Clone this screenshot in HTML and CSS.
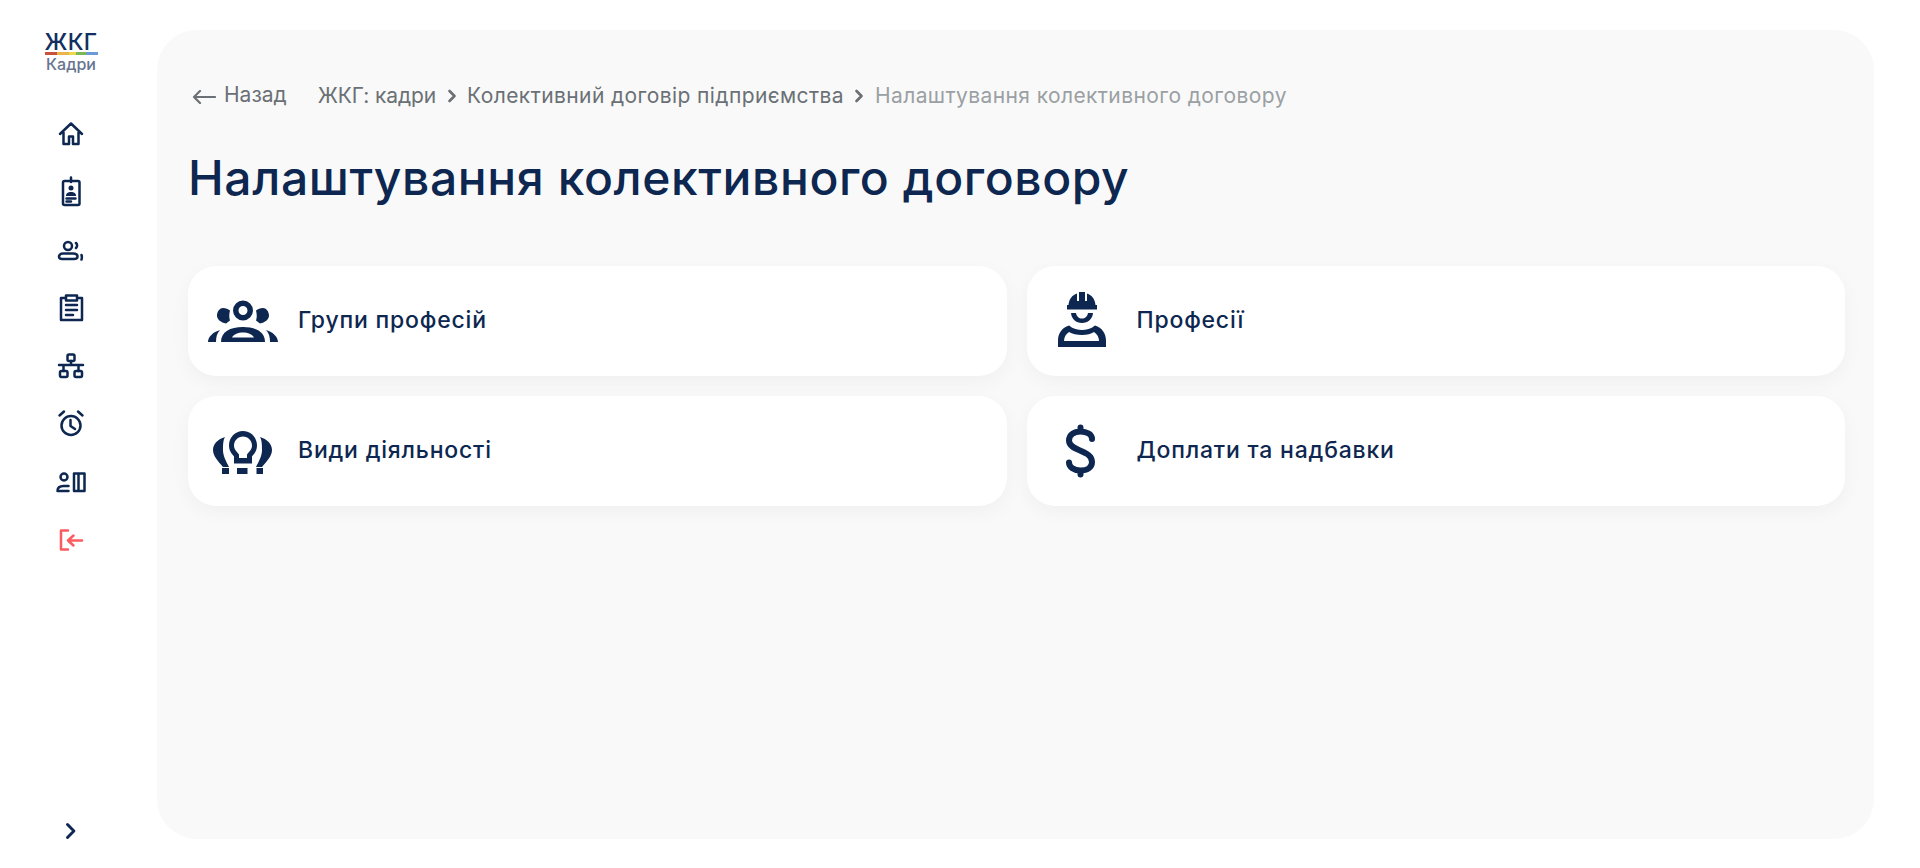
FILE: index.html
```html
<!DOCTYPE html>
<html lang="uk">
<head>
<meta charset="utf-8">
<title>Налаштування колективного договору</title>
<link rel="stylesheet" href="styles.css">
</head>
<body>
<div class="app">
  <aside class="sidebar">
    <div class="logo">
      <span class="logo-top">ЖКГ</span>
      <span class="logo-bar"></span>
      <span class="logo-sub">Кадри</span>
    </div>
    <nav class="nav">
      <a class="nav-item"><svg viewBox="0 0 32 32" class="ni"><path d="M5 17 16 6.500 27 17M8.500 15v12h5.500v-7.500h4V27h5.500V15"/></svg></a>
      <a class="nav-item"><svg viewBox="0 0 32 32" class="ni"><rect x="8" y="6" width="16.500" height="24" rx="1.500"/><path d="M16 2.500V7M11.500 23.500h9M11.500 26.500h4.500"/><circle class="fl" cx="16" cy="13" r="2.500"/><path class="fl" d="M11 21c0-3 2-4 5-4s5 1 5 4z"/></svg></a>
      <a class="nav-item"><svg viewBox="0 0 32 32" class="ni"><circle cx="13" cy="13" r="4"/><path d="M8 20.500h10c3 0 4.500 1.500 4.500 3s-1.500 2.500-3.500 2.500H7c-2 0-3-1-3-2.500s1.500-3 4-3zM21 10c1.500 1.500 1.500 3.500 0 5M26.500 22c.5 1.500.5 3 0 4.500"/></svg></a>
      <a class="nav-item"><svg viewBox="0 0 32 32" class="ni"><path d="M10.500 7H6v22h21V7h-4.500M11 4.500h11v5H11zM11 14h11M11 19h11M11 24h7"/></svg></a>
      <a class="nav-item"><svg viewBox="0 0 32 32" class="ni"><rect x="12.500" y="5.500" width="7" height="6.500" rx="1.500"/><rect x="5" y="22" width="7.500" height="6" rx="1.500"/><rect x="19.500" y="22" width="7.500" height="6" rx="1.500"/><path d="M16 12v4M4 16h24M8.500 16v6M23.500 16v6"/></svg></a>
      <a class="nav-item"><svg viewBox="0 0 32 32" class="ni"><circle cx="16" cy="18.500" r="9.500"/><path d="M15.500 13v6l4.500 3M4.500 8.500 9 4.500M27.500 8.500 23 4.500"/></svg></a>
      <a class="nav-item"><svg viewBox="0 0 32 32" class="ni"><circle cx="9" cy="12" r="3.500"/><path d="M2.500 26h11M2.500 26c0-3 2-5 6-5h5M19 8.500h10.500V26H19zM23.500 8.500V26"/></svg></a>
      <a class="nav-item"><svg viewBox="0 0 32 32" class="ni ni-exit"><path d="M13 7.500H6v19h7M27 17.500H13M18.500 12.500l-5.500 5 5.500 5"/></svg></a>
    </nav>
    <a class="expand"><svg viewBox="0 0 12 16" class="ni"><path d="M3 2.500 8.500 8 3 13.500"/></svg></a>
  </aside>

  <main class="panel">
    <div class="crumbs">
      <a class="back"><svg viewBox="0 0 24 14" class="back-ico"><path d="M23 7H2M8 1 2 7l6 6"/></svg><span class="back-t">Назад</span></a>
      <a class="crumb crumb-first">ЖКГ: кадри</a>
      <svg viewBox="0 0 10 14" class="sep"><path d="M2.500 2 7.500 7l-5 5"/></svg>
      <a class="crumb">Колективний договір підприємства</a>
      <svg viewBox="0 0 10 14" class="sep"><path d="M2.500 2 7.500 7l-5 5"/></svg>
      <span class="crumb crumb-now">Налаштування колективного договору</span>
    </div>
    <h1 class="title">Налаштування колективного договору</h1>
    <section class="grid">
      <a class="card">
        <svg viewBox="0 -2 72 60" class="ci"><path fill-rule="evenodd" d="M35 7.500a10 10 0 1 1 0 20 10 10 0 0 1 0-20zm0 5.500a4.500 4.500 0 1 0 0 9 4.500 4.500 0 0 0 0-9zM15 15c3 0 5 1 7 2.500-1 4-1 7 0 10l-4 3c-5-1-9-4-9-8 0-4 3-7.500 6-7.500zM55 15c-3 0-5 1-7 2.500 1 4 1 7 0 10l4 3c5-1 9-4 9-8 0-4-3-7.500-6-7.500zM35 34c13 0 22 5 22 15H13c0-10 9-15 22-15zm0 5.500c-5 0-9 1.500-11 5h22c-2-3.500-6-5-11-5zM12 37c-3 3-4 7-4 12H0c0-5 5-10 12-12zM58 37c3 3 4 7 4 12h8c0-5-5-10-12-12z"/></svg>
        <span class="card-t">Групи професій</span>
      </a>
      <a class="card">
        <svg viewBox="0 -2 72 60" class="ci"><path fill-rule="evenodd" d="M32-1h6v9h2V.5c5 1.500 8 6 8.500 11.500H50v4.500H20V12h1.500c.5-5.500 3.500-10 8.500-11.500V8h2zM24 20h5c.5 3.500 3 5.500 6 5.500s5.500-2 6-5.500h5c-.5 6-5 10-11 10S24.500 26 24 20zM35 37c4 0 9-1 13-4.500 7 2 11 8 11 15V54H11v-6.500c0-7 4-13 11-15 4 3.500 9 4.500 13 4.500zM22 39c-3 2-5 5-5 9h35c0-4-2-7-5-9-3 2-7 3-12 3s-10-1-13-3z"/></svg>
        <span class="card-t">Професії</span>
      </a>
      <a class="card">
        <svg viewBox="0 -2 72 60" class="ci"><path fill-rule="evenodd" d="M35 8c8 0 14 6.500 14 14.500 0 5-2.500 8-5 11v7H26v-7c-2.500-3-5-6-5-11C21 14.500 27 8 35 8zm0 5.500c-5 0-9 4-9 9 0 4 3 6.500 5 9V35h8v-3.500c2-2.500 5-5 5-9 0-5-4-9-9-9zM14 45h7v6h-7zM29 45h10.500v6H29zM48.500 45H55v6h-6.500zM17 14c-2 3-2 9-2 13 0 6 3 11 6 17h-6C10 38 5 33 5 27c0-6 5-11 12-13zM52 14c2 3 2 9 2 13 0 6-3 11-6 17h6c5-6 10-11 10-17 0-6-5-11-12-13z"/></svg>
        <span class="card-t">Види діяльності</span>
      </a>
      <a class="card">
        <svg viewBox="0 -2 72 60" class="ci ci-dollar"><path d="M45 16c0-4.500-5-7.500-11.500-7.500S22 12 22 17.500c0 11 23 9 23 21.500 0 5.500-5 8.500-11.500 8.500S22 44 22 39.500M33.500 4.500v4M33.500 47.500v4"/></svg>
        <span class="card-t">Доплати та надбавки</span>
      </a>
    </section>
  </main>
</div>
</body>
</html>
```
FILE: styles.css
```css
* { box-sizing: border-box; }
html, body { margin: 0; height: 100%; background: #fff; }
body { font-family: "Inter", "Noto Sans", sans-serif; color: #0d2750; }
.app { display: flex; height: 868px; overflow: hidden; }

.sidebar { width: 157px; flex: none; display: flex; flex-direction: column; align-items: center; padding-top: 32px; padding-right: 15px; }
.logo { display: flex; flex-direction: column; align-items: center; width: 54px; }
.logo-top { font-size: 23px; line-height: 20px; font-weight: 500; letter-spacing: .3px; color: #12305f; }
.logo-bar { width: 53px; height: 3px; background: linear-gradient(90deg, #c8513f 0 22%, #eab54a 22% 45%, #ecd94a 45% 58%, #7cb756 58% 78%, #6b9ad8 78%); }
.logo-sub { font-size: 16px; line-height: 19px; font-weight: 500; color: #66748f; }

.nav { display: flex; flex-direction: column; gap: 26px; margin-top: 43px; }
.nav-item { display: block; width: 32px; height: 32px; }
.ni { display: block; width: 100%; height: 100%; fill: none; stroke: #0d2750; stroke-width: 2.5; stroke-linecap: round; stroke-linejoin: round; }
.ni .fl { fill: #0d2750; stroke: none; }
.ni-exit { stroke: #fb5b5f; }
.expand { width: 14px; height: 20px; margin-top: auto; margin-bottom: 27px; }

.panel { flex: 1; margin: 30px 46px 29px 0; background: #f9f9f9; border-radius: 40px; padding: 0 29px 0 31px; min-width: 0; }

.crumbs { display: flex; align-items: center; height: 25px; margin-top: 53px; font-size: 21px; letter-spacing: .4px; color: #6a7075; }
.back { display: flex; align-items: center; margin-right: 31px; }
.back-ico { width: 24px; height: 14px; margin: 2px 8px 0 4px; fill: none; stroke: #6a7075; stroke-width: 2.2; stroke-linecap: round; stroke-linejoin: round; }
.back-t { position: relative; top: -1px; letter-spacing: 0; }
.crumb-first { letter-spacing: -.1px; }
.sep { width: 10px; height: 14px; margin: 0 10.5px; fill: none; stroke: #6a7075; stroke-width: 2.6; stroke-linecap: round; stroke-linejoin: round; }
.crumb-now { color: #9aa0a3; }

.title { margin: 42px 0 0; font-size: 48px; line-height: 56px; font-weight: 500; color: #0d2750; letter-spacing: .6px; }

.grid { display: grid; grid-template-columns: 1fr 1fr; gap: 20px; margin-top: 60px; }
.card { display: flex; align-items: center; gap: 18px; height: 110px; background: #fff; border-radius: 28px; box-shadow: 0 6px 20px rgba(20, 30, 60, .04); padding-left: 20px; }
.ci { display: block; flex: none; width: 72px; height: 60px; fill: #0d2750; }
.ci-dollar { fill: none; stroke: #0d2750; stroke-width: 6; stroke-linecap: round; }
.card-t { font-size: 23px; font-weight: 500; color: #0d2750; letter-spacing: .8px; padding-bottom: 2px; }
```
